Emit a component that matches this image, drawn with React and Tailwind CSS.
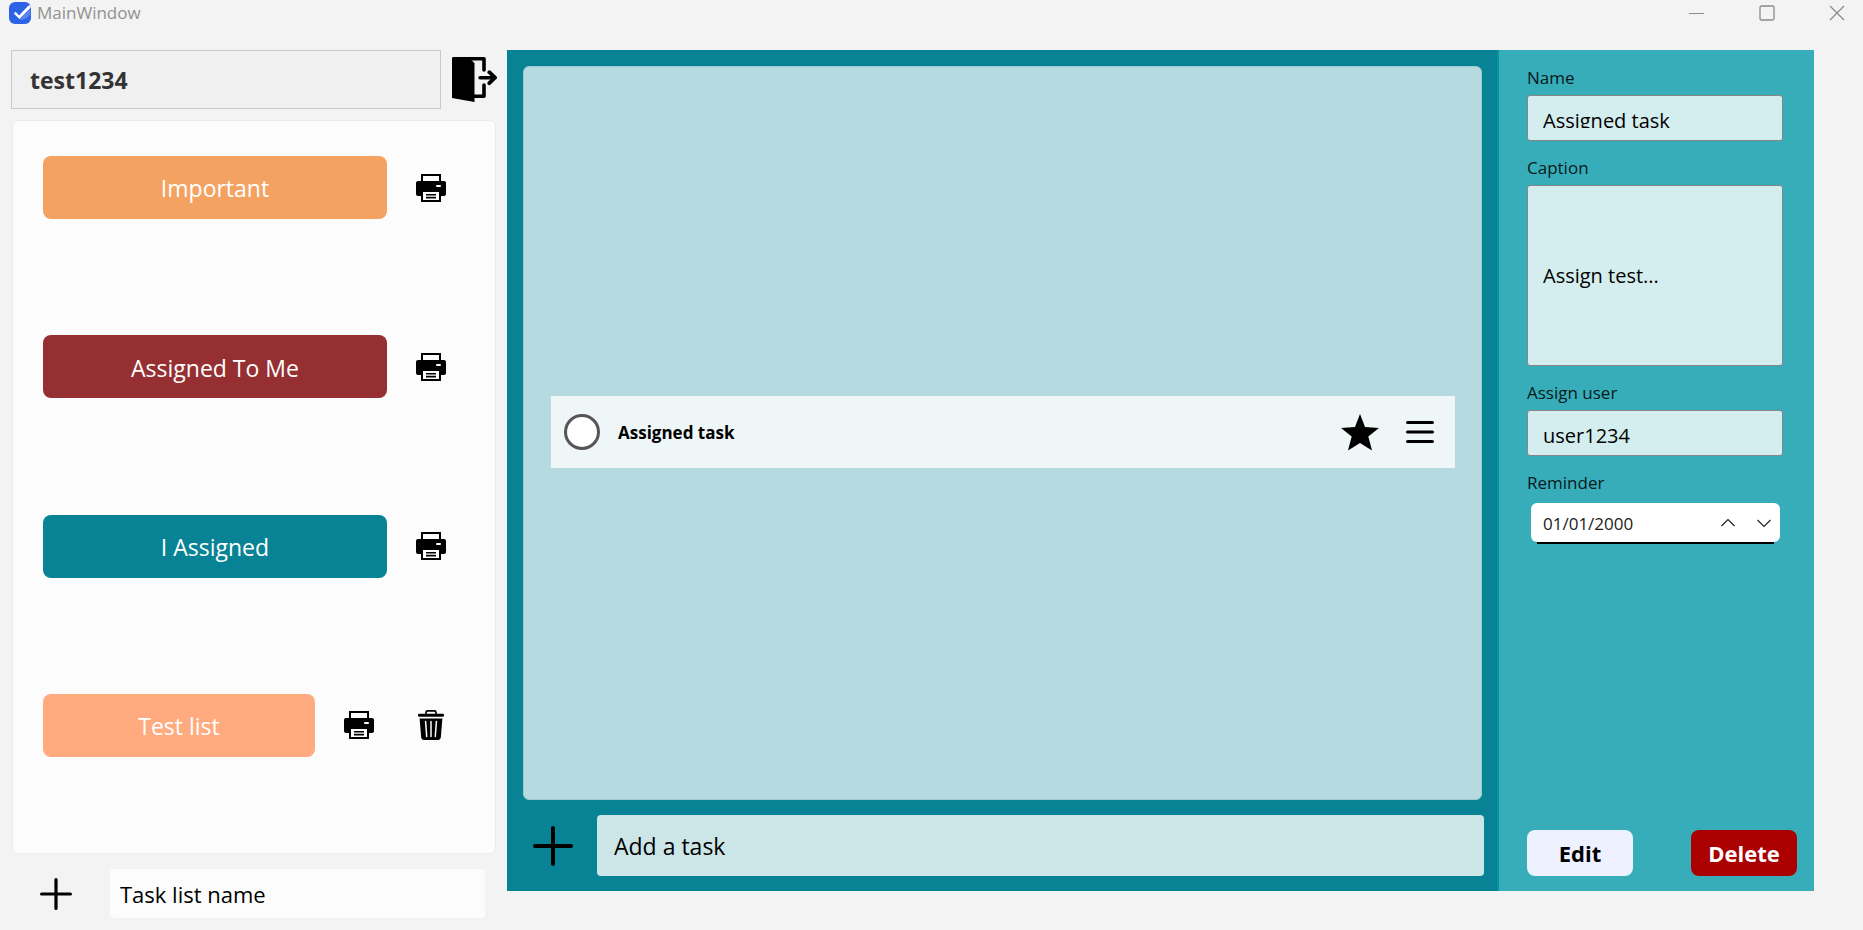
import React from "react";

function LogoIcon() {
  return (
    <svg viewBox="0 0 22 22" className="size-[22px]" aria-hidden="true">
      <rect width="22" height="22" rx="6" fill="#2b62e6" />
      <path d="M10 18 L21 7 L21.5 12 C19 16 15 18 10 18Z" fill="#5a87ee" />
      <path d="M10 13.6 L18.5 4.6 L21.4 2.6 L21.6 5.8 L10.4 17 L4.8 11.4 L6.6 9.8Z" fill="#fff" />
    </svg>
  );
}

function DoorIcon() {
  return (
    <svg viewBox="0 0 45 45" className="size-[45px]" aria-hidden="true">
      <path d="M0 1 L1 0 H15 L21 4.5 L22.5 6.5 V45 L0 41Z" fill="#000" />
      <path d="M2 1.8 H32 V13 M32 28 V39.2 H22" fill="none" stroke="#000" strokeWidth="3.6" strokeLinecap="round" strokeLinejoin="round" />
      <path d="M28 20.7 H42" stroke="#000" strokeWidth="3.4" strokeLinecap="round" />
      <path d="M37.3 15.2 L43 20.7 L37.3 26.2" fill="none" stroke="#000" strokeWidth="3.8" strokeLinecap="round" strokeLinejoin="round" />
    </svg>
  );
}

function PrinterIcon() {
  return (
    <svg viewBox="0 0 30 28" className="h-7 w-[30px]" aria-hidden="true">
      <rect x="6" y="1" width="18" height="8" fill="#fcfcfc" stroke="#000" strokeWidth="2" />
      <rect x="0" y="7" width="30" height="15" rx="2" fill="#000" />
      <rect x="20" y="11" width="5" height="2" rx="1" fill="#fff" />
      <rect x="5" y="17" width="20" height="11" fill="#000" />
      <rect x="7" y="18" width="16" height="8" fill="#fff" />
      <path d="M10 20.7 H20 M10 23.6 H20" stroke="#000" strokeWidth="1.6" />
    </svg>
  );
}

function TrashIcon() {
  return (
    <svg viewBox="0 0 26 30" className="h-[30px] w-[26px]" aria-hidden="true">
      <path d="M8 4.5 V2.4 Q8 0.9 9.6 0.9 H16.4 Q18 0.9 18 2.4 V4.5" fill="none" stroke="#000" strokeWidth="1.7" />
      <rect x="0" y="3.8" width="26" height="3" rx="1.3" fill="#000" />
      <path d="M1.6 8.5 H24.4 L22.8 27.6 Q22.5 30 20.4 30 H5.6 Q3.5 30 3.2 27.6Z" fill="#000" />
      <path d="M7.6 11.5 L8.7 26.5 M13 11.5 V26.5 M18.4 11.5 L17.3 26.5" stroke="#fff" strokeWidth="1.5" strokeLinecap="round" />
    </svg>
  );
}

function PlusIcon({ className }) {
  return (
    <svg viewBox="0 0 40 40" className={className} aria-hidden="true">
      <path d="M20 2 V38 M2 20 H38" stroke="#000" strokeWidth="4" strokeLinecap="round" />
    </svg>
  );
}

function StarIcon() {
  return (
    <svg viewBox="0 0 38 37" className="h-[37px] w-[38px]" aria-hidden="true">
      <path d="M19 0 L24 13 L38 13.9 L27.3 22.6 L31 36.6 L19 29 L7 36.6 L10.7 22.6 L0 13.9 L14 13Z" fill="#000" />
    </svg>
  );
}

function MenuIcon() {
  return (
    <svg viewBox="0 0 28 24" className="h-6 w-7" aria-hidden="true">
      <path d="M1.5 2.5 H26.5 M1.5 12 H26.5 M1.5 21.5 H26.5" stroke="#000" strokeWidth="3" strokeLinecap="round" />
    </svg>
  );
}

const lists = [
  { name: "Important", color: "bg-[#f4a261]" },
  { name: "Assigned To Me", color: "bg-[#952f31]" },
  { name: "I Assigned", color: "bg-[#088395]" },
  { name: "Test list", color: "bg-[#ffaa7f]", removable: true },
];

function TitleBar() {
  return (
    <header className="flex h-[26px] items-center justify-between pr-[18px] pl-[9px]">
      <div className="flex items-center gap-[6px]">
        <LogoIcon />
        <span className="text-[17px] leading-6 text-[#919191]">MainWindow</span>
      </div>
      <div className="flex items-center gap-[54px] text-[#8b8b8b]">
        <button type="button" aria-label="Minimize">
          <svg viewBox="0 0 16 16" className="size-4"><path d="M0 8.5 H15" stroke="currentColor" /></svg>
        </button>
        <button type="button" aria-label="Maximize">
          <svg viewBox="0 0 16 16" className="size-4"><rect x="1" y="1" width="14" height="14" rx="1.5" fill="none" stroke="currentColor" strokeWidth="1.3" /></svg>
        </button>
        <button type="button" aria-label="Close">
          <svg viewBox="0 0 16 16" className="size-4"><path d="M1 1 L15 15 M15 1 L1 15" stroke="currentColor" strokeWidth="1.3" /></svg>
        </button>
      </div>
    </header>
  );
}

function Sidebar() {
  return (
    <aside className="flex w-[507px] shrink-0 flex-col pr-[10px] pb-3 pl-[11px]">
      <div className="flex items-center justify-between">
        <button type="button" className="h-[59px] w-[430px] border border-[#c9c9c9] bg-[#f0f0f0] px-[18px] pt-[2px] text-left text-[23px] font-bold text-[#333]">
          test1234
        </button>
        <button type="button" aria-label="Log out"><DoorIcon /></button>
      </div>
      <ul className="mx-px mt-[11px] flex flex-1 flex-col justify-between rounded-md border border-[#ebebeb] bg-[#fcfcfc] pt-[35px] pr-7 pb-24 pl-[30px]">
        {lists.map((list) => (
          <li key={list.name} className="flex h-[63px] items-stretch">
            <button type="button" className={`mr-2 flex-1 rounded-lg pt-[2px] text-[23px] text-white ${list.color}`}>
              {list.name}
            </button>
            <button type="button" aria-label={`Print ${list.name}`} className="flex w-[72px] items-center justify-center">
              <PrinterIcon />
            </button>
            {list.removable && (
              <button type="button" aria-label={`Remove ${list.name}`} className="flex w-[72px] items-center justify-center">
                <TrashIcon />
              </button>
            )}
          </li>
        ))}
      </ul>
      <div className="mt-[15px] flex items-center pr-3">
        <button type="button" aria-label="Add task list" className="flex w-[99px] justify-start pl-[29px]">
          <PlusIcon className="size-8" />
        </button>
        <input aria-label="Task list name" defaultValue="Task list name" className="h-[49px] min-w-0 flex-1 rounded-sm bg-[#fcfcfc] px-[10px] text-[22px] text-black outline-none" />
      </div>
    </aside>
  );
}

function TaskPanel() {
  return (
    <main className="flex min-w-0 flex-1 flex-col border-r-2 border-[#0793a5] bg-[#088395] pt-4 pr-[13px] pb-[15px] pl-[14px]">
      <ul className="mx-[2px] flex flex-1 flex-col justify-center rounded-md border border-[#9fc9cf] bg-[#b5dae0] pr-[26px] pb-[2px] pl-[27px]">
        <li className="flex h-[72px] items-center bg-[#eef6f8] pr-[21px] pl-[13px]">
          <input
            id="task-done"
            type="checkbox"
            className="size-9 appearance-none rounded-full border-[3px] border-[#555] bg-white"
          />
          <label htmlFor="task-done" className="ml-[18px] flex-1 pt-[2px] text-[17px] font-bold text-black">
            Assigned task
          </label>
          <button type="button" aria-label="Mark as important"><StarIcon /></button>
          <button type="button" aria-label="Task details" className="ml-[27px]"><MenuIcon /></button>
        </li>
      </ul>
      <div className="mt-[15px] flex items-center">
        <button type="button" aria-label="Add task" className="flex w-[76px] pl-[12px]">
          <PlusIcon className="size-10" />
        </button>
        <input aria-label="Add a task" defaultValue="Add a task" className="h-[61px] min-w-0 flex-1 rounded bg-[#cce5e7] px-[17px] text-[23px] text-black outline-none" />
      </div>
    </main>
  );
}

function Field({ id, label, value, tall }) {
  return (
    <div className="mb-[15px] flex flex-col gap-[5px]">
      <label htmlFor={id} className="text-[17px] leading-6 text-[#07191b]">{label}</label>
      <div className={`w-64 rounded-[3px] border border-[#868686] bg-[#d4edee] px-[15px] ${tall ? "h-[181px]" : "h-[46px]"}`}>
        <div className={tall ? "h-full" : "h-8 overflow-hidden"}>
          <input
            id={id}
            defaultValue={value}
            className={`block w-full text-[20px] text-black outline-none ${tall ? "h-full" : "h-12"}`}
          />
        </div>
      </div>
    </div>
  );
}

function DetailsPanel() {
  return (
    <section aria-label="Task details" className="flex w-[315px] shrink-0 flex-col bg-[#37adba] pt-4 pr-[17px] pb-[15px] pl-7">
      <Field id="name" label="Name" value="Assigned task" />
      <Field id="caption" label="Caption" value="Assign test..." tall />
      <Field id="assignee" label="Assign user" value="user1234" />
      <label htmlFor="reminder" className="text-[17px] leading-6 text-[#07191b]">Reminder</label>
      <div className="mt-2 ml-1 w-[249px]">
        <div className="flex h-[39px] items-center rounded-md bg-white pr-2 pl-3">
          <input id="reminder" defaultValue="01/01/2000" className="min-w-0 flex-1 pt-[2px] text-[17px] text-[#1b1b1b] outline-none" />
          <button type="button" aria-label="Increase date" className="mr-5">
            <svg viewBox="0 0 16 16" className="size-4"><path d="M1.5 11 L8 4.5 L14.5 11" fill="none" stroke="#222" strokeWidth="1.2" /></svg>
          </button>
          <button type="button" aria-label="Decrease date">
            <svg viewBox="0 0 16 16" className="size-4"><path d="M1.5 5 L8 11.5 L14.5 5" fill="none" stroke="#222" strokeWidth="1.2" /></svg>
          </button>
        </div>
        <div className="mx-[6px] h-[2px] bg-black" />
      </div>
      <div className="mt-auto flex justify-between">
        <button type="button" className="h-[46px] w-[106px] rounded-lg bg-[#eef1ff] text-[22px] font-bold text-black">Edit</button>
        <button type="button" className="h-[46px] w-[106px] rounded-lg bg-[#aa0000] text-[22px] font-bold text-white">Delete</button>
      </div>
    </section>
  );
}

export default function App() {
  return (
    <div className="flex min-h-screen flex-col bg-[#f3f3f3] font-['Open_Sans','Noto_Sans',sans-serif]">
      <TitleBar />
      <div className="flex flex-1 pt-6">
        <Sidebar />
        <div className="mr-[49px] mb-[39px] flex min-w-0 flex-1">
          <TaskPanel />
          <DetailsPanel />
        </div>
      </div>
    </div>
  );
}
